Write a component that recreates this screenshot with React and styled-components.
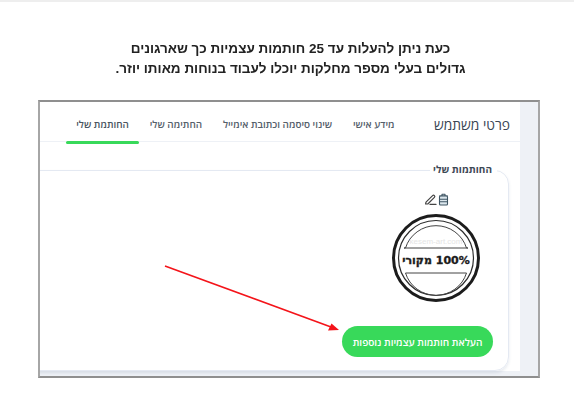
import React from 'react'
import styled, { createGlobalStyle } from 'styled-components';

const GlobalStyle = createGlobalStyle`
  html, body {
    margin: 0;
    padding: 0;
    background: #fff;
  }
  body {
    font-family: "Open Sans", "Liberation Sans", sans-serif;
  }
`

const Page = styled.div`
  position: relative;
  width: 574px;
  height: 416px;
  overflow: hidden;
  border-top: 2px solid #eeeeee;
  box-sizing: border-box;
  display: flex;
  flex-direction: column;
  align-items: center;
  filter: blur(0.35px);
`

const Heading = styled.p`
  direction: rtl;
  margin: 37px 0 0 7px;
  height: 61px;
  text-align: center;
  font-family: "Liberation Sans", sans-serif;
  font-size: 13.5px;
  font-weight: 700;
  line-height: 20px;
  color: #222;
`

const Frame = styled.div`
  direction: rtl;
  flex-shrink: 0;
  width: 502px;
  height: 278px;
  margin-left: 4px;
  box-sizing: border-box;
  border: 2px solid;
  border-color: #8f8f8f #a6a6a6 #8f8f8f #a6a6a6;
  background: #eef1f6;
  display: flex;
  overflow: hidden;
`

const Strip = styled.div`
  width: 18px;
  flex-shrink: 0;
`

const Main = styled.div`
  flex: 1;
  min-width: 0;
  height: 269px;
  background: #fff;
`

const TabBar = styled.div`
  height: 39px;
  display: flex;
  align-items: stretch;
  padding-right: 10px;
  border-bottom: 1px solid #eef1f6;
`

const Title = styled.div`
  font-size: 13.8px;
  line-height: 45px;
  color: #3a4654;
  margin-left: 29px;
  white-space: nowrap;
`

const Tab = styled.div`
  position: relative;
  padding: 0 10.4px;
  font-size: 9.9px;
  font-weight: 600;
  line-height: 45px;
  color: ${props => (props.$active ? '#4a5561' : '#55606b')};
  white-space: nowrap;
  &::after {
    content: '';
    display: ${props => (props.$active ? 'block' : 'none')};
    position: absolute;
    left: 0;
    right: 0;
    bottom: -3px;
    height: 3px;
    border-radius: 2px;
    background: #38d95a;
  }
`

const Card = styled.fieldset`
  margin: 21px 11px 0 -30px;
  padding: 0 15px 0 0;
  height: 208px;
  box-sizing: border-box;
  border: 1px solid #e4e9f2;
  border-radius: 14px;
  box-shadow: 0 2px 3px rgba(60, 80, 120, 0.12);
  display: flex;
  flex-direction: column;
`

const CardLegend = styled.legend`
  padding: 0 5px 0 3px;
  margin-right: -4px;
  font-size: 10px;
  font-weight: 700;
  line-height: 14px;
  color: #3d4855;
  transform: translateY(-1px);
`

const StampColumn = styled.div`
  width: 114px;
  display: flex;
  flex-direction: column;
  align-items: center;
`

const IconRow = styled.div`
  direction: ltr;
  height: 14px;
  margin-top: 15px;
  display: flex;
  align-items: center;
  gap: 1px;
`

const Stamp = styled.svg`
  display: block;
  width: 90px;
  height: 90px;
  margin-top: 7px;
`

const StampText = styled.text`
  font-family: "DejaVu Sans", "Liberation Sans", sans-serif;
  font-weight: 700;
  font-size: 11px;
  fill: #1c1c1c;
  stroke: #1c1c1c;
  stroke-width: 0.35px;
`

const Watermark = styled.text`
  font-family: "Liberation Sans", sans-serif;
  font-size: 8px;
  fill: #e4e4e4;
`

const UploadButton = styled.button`
  direction: rtl;
  width: 151px;
  height: 31px;
  margin: 23px 0 0;
  padding: 0;
  border: 0;
  border-radius: 16px;
  background: #38d95a;
  color: #fff;
  font-family: "Open Sans", "Liberation Sans", sans-serif;
  font-size: 10px;
  font-weight: 600;
  white-space: nowrap;
`

const ButtonRow = styled.div`
  display: flex;
  justify-content: flex-start;
`

const Arrow = styled.svg`
  position: absolute;
  left: 0;
  top: -2px;
  pointer-events: none;
`

function PencilIcon() {
  return (
    <svg width="13" height="13" viewBox="0 0 13 13" fill="none" stroke="#444" strokeWidth="1.2" strokeLinejoin="round" strokeLinecap="round">
      <path d="M2 9.2 8.6 2.6a1.2 1.2 0 0 1 1.8 1.8L3.8 11H1.6z" />
      <path d="M6 11.4h6" />
    </svg>
  )
}

function TrashIcon() {
  return (
    <svg width="11" height="13" viewBox="0 0 11 13" fill="#dbe6ec" stroke="#3f5563" strokeWidth="1.1" strokeLinejoin="round">
      <path d="M1 3h9M4 3V1.2h3V3" fill="none" />
      <rect x="1.5" y="3" width="8" height="9" rx="1" />
      <path d="M1.7 6.2h7.6M1.7 8.8h7.6" />
    </svg>
  )
}

function App() {
  return (
    <Page>
      <GlobalStyle />
      <Heading>
        כעת ניתן להעלות עד 25 חותמות עצמיות כך שארגונים
        <br />
        גדולים בעלי מספר מחלקות יוכלו לעבוד בנוחות מאותו יוזר.
      </Heading>
      <Frame>
        <Strip />
        <Main>
          <TabBar>
            <Title>פרטי משתמש</Title>
            <Tab>מידע אישי</Tab>
            <Tab>שינוי סיסמה וכתובת אימייל</Tab>
            <Tab>החתימה שלי</Tab>
            <Tab $active>החותמת שלי</Tab>
          </TabBar>
          <Card>
            <CardLegend>החותמות שלי</CardLegend>
            <StampColumn>
              <IconRow>
                <PencilIcon />
                <TrashIcon />
              </IconRow>
              <Stamp viewBox="0 0 90 90">
                <circle cx="45" cy="45" r="42.5" fill="none" stroke="#1c1c1c" strokeWidth="3" />
                <circle cx="45" cy="45" r="37.5" fill="none" stroke="#2c2c2c" strokeWidth="1.2" />
                <path d="M13 35 L14.5 35 A32 32 0 0 1 75.5 35 L77 35 Z" fill="none" stroke="#444" strokeWidth="1" />
                <path d="M14.5 60 A32 32 0 0 0 75.5 60 Z" fill="none" stroke="#444" strokeWidth="1" />
                <Watermark x="45" y="31" textAnchor="middle">kesem-art.com</Watermark>
                <StampText x="45" y="51" textAnchor="middle" direction="rtl">100% מקורי</StampText>
              </Stamp>
            </StampColumn>
            <ButtonRow>
              <UploadButton>העלאת חותמות עצמיות נוספות</UploadButton>
            </ButtonRow>
          </Card>
        </Main>
      </Frame>
      <Arrow width="574" height="416" viewBox="0 0 574 416">
        <path d="M165 266 L331 327" stroke="#f4141a" strokeWidth="1.6" fill="none" />
        <path d="M339 330 L328 330.5 L331.5 323.5 Z" fill="#f4141a" />
      </Arrow>
    </Page>
  );
}

export default App;
